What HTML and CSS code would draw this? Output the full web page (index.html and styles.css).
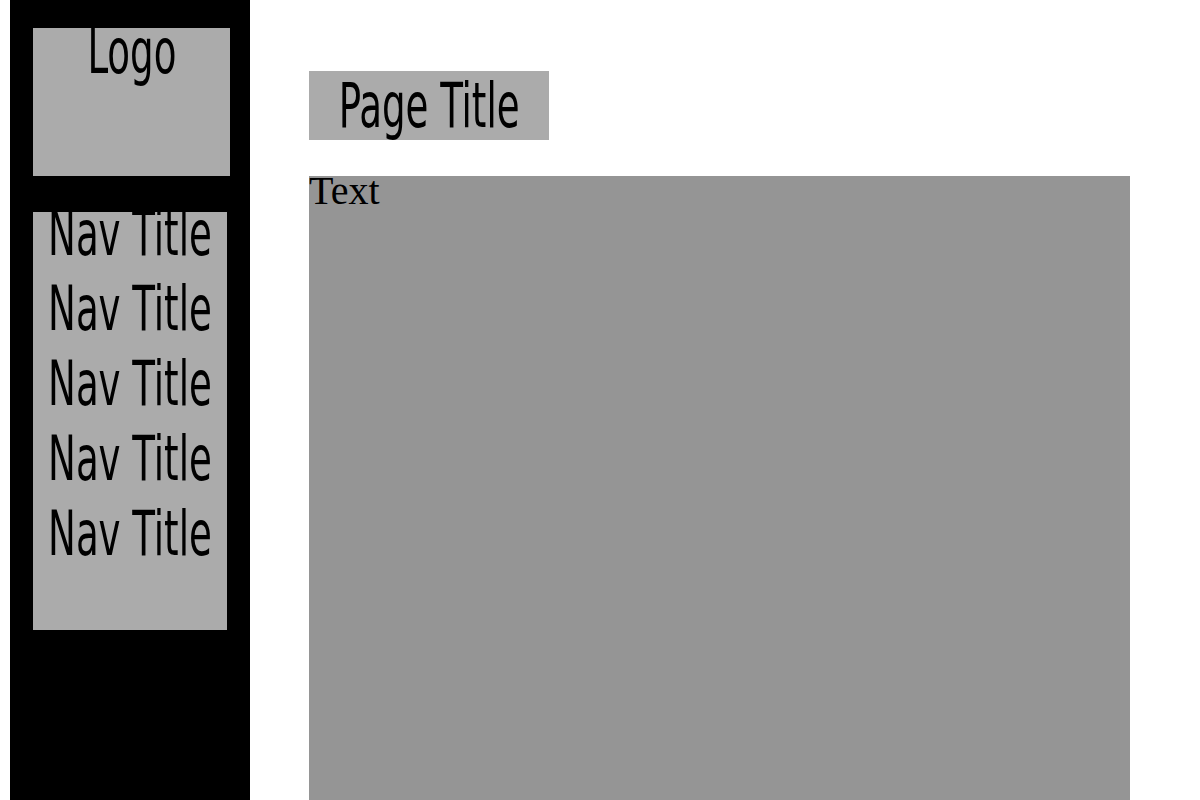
FILE: index.html
```html
<!DOCTYPE html>
<html lang="en">
<head>
    <meta charset="UTF-8">
    <meta name="viewport" content="width=device-width, initial-scale=1.0">
    <title>Page Title</title>
    <link rel="stylesheet" href="styles.css">
</head>
<body>
    <div class="sidebar">
        <div class="logo"><span class="narrow">Logo</span></div>
        <ul class="nav">
            <li><span class="narrow">Nav Title</span></li>
            <li><span class="narrow">Nav Title</span></li>
            <li><span class="narrow">Nav Title</span></li>
            <li><span class="narrow">Nav Title</span></li>
            <li><span class="narrow">Nav Title</span></li>
        </ul>
    </div>

    <div class="main">
        <h1 class="page-title"><span class="narrow">Page Title</span></h1>
        <div class="content">Text</div>
    </div>
</body>
</html>
```

FILE: styles.css
```css
body { margin: 0; display: flex; min-height: 800px; background: #fff; }

/* 窄字体（标题类文字共用） */
.logo, .nav, .page-title {
    font-family: "Liberation Sans Narrow", "DejaVu Sans Condensed", sans-serif;
    font-size: 63px;
    font-weight: normal;
    color: #000;
    text-align: center;
}
.narrow {
    display: inline-block;
    margin: 0 -80px; /* 缩放前的宽度不要撑开居中 */
    transform: scaleX(0.655);
    white-space: nowrap;
}

/* 侧边栏 */
.sidebar {
    margin-left: 10px;
    width: 240px;
    flex-shrink: 0;
    background: #000;
    padding: 28px 0 0 23px;
    box-sizing: border-box;
}
.logo {
    width: 197px;
    height: 148px;
    background: #ababab;
    line-height: 48px;
}
.nav {
    list-style: none;
    margin: 36px 0 0;
    padding: 0;
    width: 194px;
    height: 418px;
    background: #ababab;
}
.nav li { line-height: 75px; position: relative; top: -16px; }

/* 主区域 */
.main {
    margin-left: 59px;
    width: 821px;
    padding-top: 71px;
    display: flex;
    flex-direction: column;
}
.page-title {
    margin: 0;
    width: 240px;
    height: 69px;
    line-height: 69px;
    background: #ababab;
}
.content {
    margin-top: 36px;
    flex: 1;
    background: #959595;
    font-family: "Liberation Serif", serif;
    font-size: 40px;
    line-height: 29px;
    color: #000;
}
```
